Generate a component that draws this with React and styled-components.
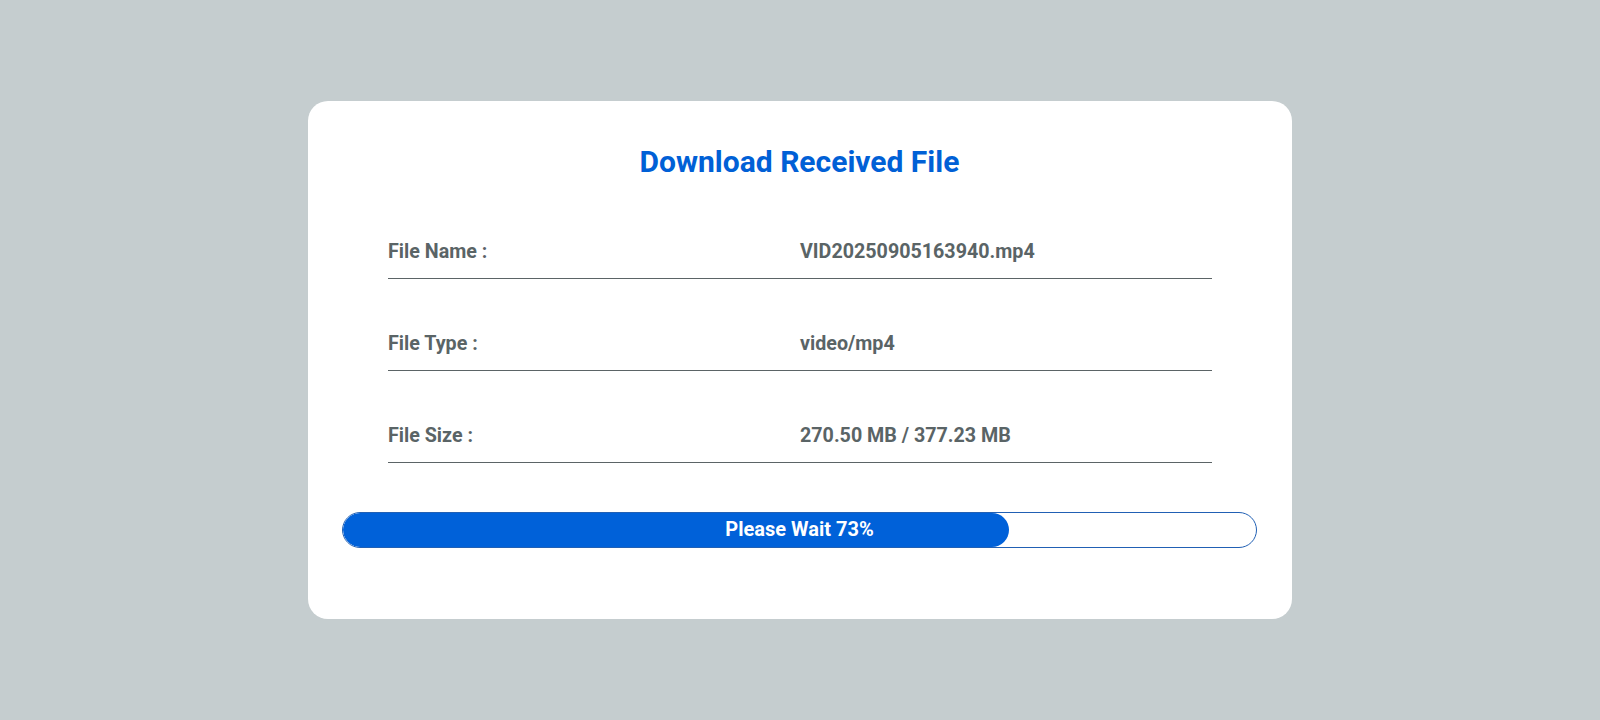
import React from "react";
import styled, { createGlobalStyle } from "styled-components";

const GlobalStyle = createGlobalStyle`
  html, body {
    margin: 0;
    padding: 0;
    background: #c5cdcf;
    font-family: Roboto, "Liberation Sans", Arial, sans-serif;
  }
`;

const Page = styled.div`
  width: 100vw;
  height: 100vh;
  display: flex;
  align-items: center;
  justify-content: center;
`;

const Card = styled.div`
  width: 984px;
  box-sizing: border-box;
  background: #ffffff;
  border-radius: 20px;
  padding: 43px 35px 71px 34px;
`;

const Title = styled.h2`
  margin: 0;
  font-size: 30px;
  line-height: 35px;
  font-weight: 700;
  color: #0060d6;
  text-align: center;
`;

const Details = styled.div`
  margin: 8px 45px 0 46px;
`;

const Row = styled.div`
  display: grid;
  grid-template-columns: 1fr 1fr;
  padding: 53px 0 14px;
  border-bottom: 1px solid #5b6466;
  font-size: 19.7px;
  line-height: 24px;
  font-weight: 700;
  color: #5a6466;
`;

const Progress = styled.div`
  position: relative;
  margin-top: 49px;
  height: 36px;
  box-sizing: border-box;
  border: 1px solid #2160b4;
  border-radius: 18px;
  overflow: hidden;
`;

const Fill = styled.div`
  height: 100%;
  background: #0061d9;
  border-radius: 18px;
`;

const ProgressLabel = styled.span`
  position: absolute;
  inset: 0;
  padding-bottom: 3px;
  display: flex;
  align-items: center;
  justify-content: center;
  font-size: 20px;
  font-weight: 700;
  color: #ffffff;
`;

const info = [
  { label: "File Name :", value: "VID20250905163940.mp4" },
  { label: "File Type :", value: "video/mp4" },
  { label: "File Size :", value: "270.50 MB / 377.23 MB" },
];

export default function App() {
  const percent = 73;
  return (
    <>
      <GlobalStyle />
      <Page>
        <Card>
          <Title>Download Received File</Title>
          <Details>
            {info.map((item) => (
              <Row key={item.label}>
                <span>{item.label}</span>
                <span>{item.value}</span>
              </Row>
            ))}
          </Details>
          <Progress>
            <Fill style={{ width: `${percent}%` }} />
            <ProgressLabel>Please Wait {percent}%</ProgressLabel>
          </Progress>
        </Card>
      </Page>
    </>
  );
}
